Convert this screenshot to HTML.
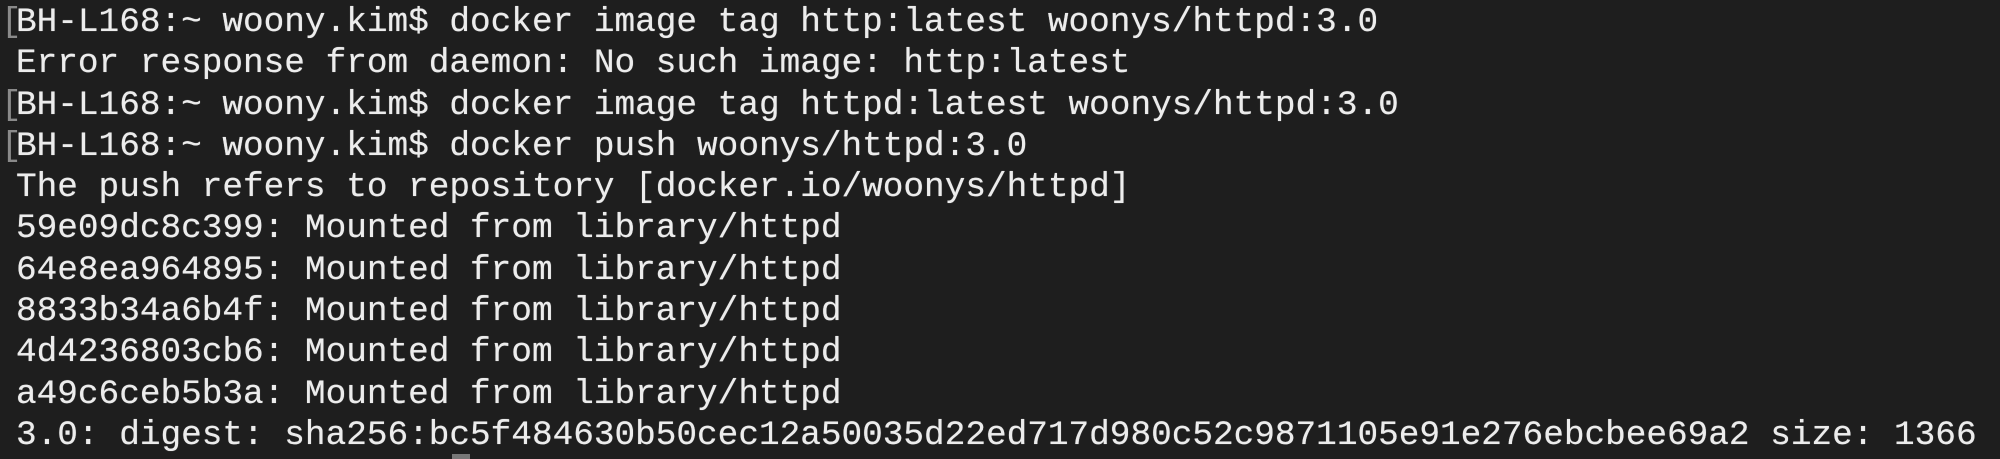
<!DOCTYPE html>
<html><head><meta charset="utf-8"><style>
html,body{margin:0;padding:0;background:#1e1e1e;width:2000px;height:459px;overflow:hidden}
pre{margin:0;position:absolute;left:16px;top:2px;font-family:"Liberation Mono",monospace;font-size:34.4px;line-height:41.3px;color:#ececec;white-space:pre;text-shadow:0 0 0.6px #ececec}
.b{position:absolute;left:1px;font-family:"Liberation Mono",monospace;font-size:34.4px;line-height:41.3px;color:#8a8a8a}
</style></head><body>
<div class="b" style="top:2px">[</div>
<div class="b" style="top:84.6px">[</div>
<div class="b" style="top:125.9px">[</div>
<pre>BH-L168:~ woony.kim$ docker image tag http:latest woonys/httpd:3.0
Error response from daemon: No such image: http:latest
BH-L168:~ woony.kim$ docker image tag httpd:latest woonys/httpd:3.0
BH-L168:~ woony.kim$ docker push woonys/httpd:3.0
The push refers to repository [docker.io/woonys/httpd]
59e09dc8c399: Mounted from library/httpd
64e8ea964895: Mounted from library/httpd
8833b34a6b4f: Mounted from library/httpd
4d4236803cb6: Mounted from library/httpd
a49c6ceb5b3a: Mounted from library/httpd
3.0: digest: sha256:bc5f484630b50cec12a50035d22ed717d980c52c9871105e91e276ebcbee69a2 size: 1366</pre>
<div style="position:absolute;left:452px;top:454px;width:18px;height:5px;background:#777"></div>
</body></html>
